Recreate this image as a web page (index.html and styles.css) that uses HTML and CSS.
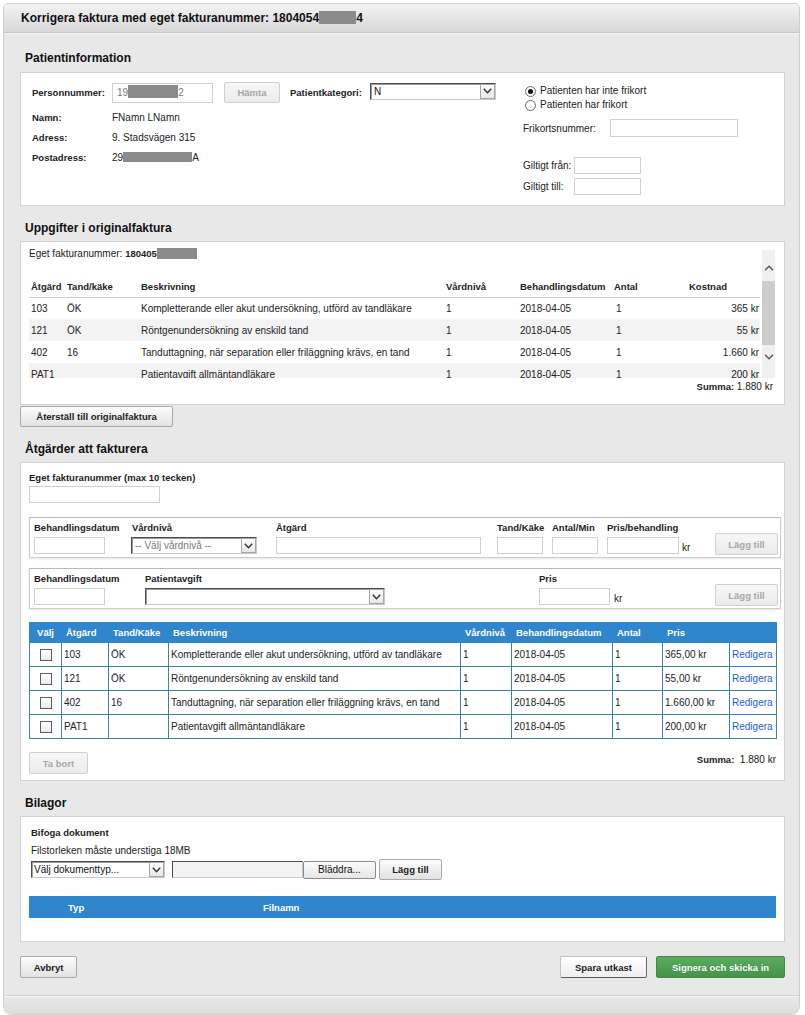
FILE: index.html
```html
<!DOCTYPE html>
<html lang="sv">
<head>
<meta charset="utf-8">
<title>Korrigera faktura</title>
<link rel="stylesheet" href="styles.css">
</head>
<body>
<div class="dialog">
  <div class="dialog-header">
    <h1 class="dialog-title">Korrigera faktura med eget fakturanummer: 1804054<span class="redact redact-title"></span>4</h1>
  </div>
  <div class="dialog-body">
    <h2 class="section-title first">Patientinformation</h2>
    <div class="box box-patient">
      <div class="patient-left">
        <div class="pnr-row">
          <span class="lbl lbl-w">Personnummer:</span>
          <div class="input input-pnr">19<span class="redact redact-pnr"></span>2</div>
          <button class="btn btn-disabled btn-hamta" disabled>Hämta</button>
          <span class="lbl lbl-kat">Patientkategori:</span>
          <div class="select select-kat"><span class="select-text">N</span><span class="select-arrow"><svg width="9" height="6" viewBox="0 0 9 6"><polyline points="0.8,0.8 4.5,4.8 8.2,0.8" fill="none" stroke="#333" stroke-width="1.4"/></svg></span></div>
        </div>
        <div class="info-row first-info"><span class="lbl lbl-w">Namn:</span><span>FNamn LNamn</span></div>
        <div class="info-row"><span class="lbl lbl-w">Adress:</span><span>9. Stadsvägen 315</span></div>
        <div class="info-row"><span class="lbl lbl-w">Postadress:</span><span>29<span class="redact redact-post"></span>A</span></div>
      </div>
      <div class="patient-right">
        <div class="radio-row"><span class="radio checked"></span>Patienten har inte frikort</div>
        <div class="radio-row"><span class="radio"></span>Patienten har frikort</div>
        <div class="frikort-row"><span class="lbl-frikort">Frikortsnummer:</span><input class="input input-frikort" type="text"></div>
        <div class="giltig-row giltig-first"><span class="lbl-giltig">Giltigt från:</span><input class="input input-giltig" type="text"></div>
        <div class="giltig-row"><span class="lbl-giltig">Giltigt till:</span><input class="input input-giltig" type="text"></div>
      </div>
    </div>

    <h2 class="section-title">Uppgifter i originalfaktura</h2>
    <div class="box box-orig">
      <div class="orig-wrap">
        <div class="orig-main">
          <div class="orig-nr">Eget fakturanummer: <b>180405</b><span class="redact redact-eget"></span></div>
          <table class="orig-table">
            <colgroup><col class="o-atg"><col class="o-tand"><col class="o-besk"><col class="o-vard"><col class="o-datum"><col class="o-antal"><col class="o-kost"></colgroup>
            <thead><tr><th>Åtgärd</th><th>Tand/käke</th><th>Beskrivning</th><th>Vårdnivå</th><th>Behandlingsdatum</th><th>Antal</th><th>Kostnad</th></tr></thead>
            <tbody>
              <tr><td>103</td><td>ÖK</td><td>Kompletterande eller akut undersökning, utförd av tandläkare</td><td>1</td><td>2018-04-05</td><td class="antal">1</td><td class="num">365 kr</td></tr>
              <tr class="alt"><td>121</td><td>ÖK</td><td>Röntgenundersökning av enskild tand</td><td>1</td><td>2018-04-05</td><td class="antal">1</td><td class="num">55 kr</td></tr>
              <tr><td>402</td><td>16</td><td>Tanduttagning, när separation eller friläggning krävs, en tand</td><td>1</td><td>2018-04-05</td><td class="antal">1</td><td class="num">1.660 kr</td></tr>
              <tr class="alt"><td>PAT1</td><td></td><td>Patientavgift allmäntandläkare</td><td>1</td><td>2018-04-05</td><td class="antal">1</td><td class="num">200 kr</td></tr>
            </tbody>
          </table>
        </div>
        <div class="scrollbar">
          <div class="sb-up"><svg width="10" height="6" viewBox="0 0 10 6"><polyline points="1,5.2 5,1.2 9,5.2" fill="none" stroke="#555" stroke-width="1.4"/></svg></div>
          <div class="sb-thumb"></div>
          <div class="sb-down"><svg width="10" height="6" viewBox="0 0 10 6"><polyline points="1,0.8 5,4.8 9,0.8" fill="none" stroke="#555" stroke-width="1.4"/></svg></div>
        </div>
      </div>
      <div class="orig-sum"><b>Summa:</b> 1.880 kr</div>
    </div>
    <button class="btn btn-reset">Återställ till originalfaktura</button>

    <h2 class="section-title">Åtgärder att fakturera</h2>
    <div class="box box-fak">
      <div class="fak-lbl">Eget fakturanummer (max 10 tecken)</div>
      <input class="input input-eget" type="text">

      <div class="fieldset">
        <div class="col c-datum"><span class="col-lbl">Behandlingsdatum</span><input class="input input-datum" type="text"></div>
        <div class="col c-vard"><span class="col-lbl">Vårdnivå</span><div class="select select-vard"><span class="select-text placeholder">-- Välj vårdnivå --</span><span class="select-arrow"><svg width="9" height="6" viewBox="0 0 9 6"><polyline points="0.8,0.8 4.5,4.8 8.2,0.8" fill="none" stroke="#333" stroke-width="1.4"/></svg></span></div></div>
        <div class="col c-atg"><span class="col-lbl">Åtgärd</span><input class="input input-atg" type="text"></div>
        <div class="col c-tand"><span class="col-lbl">Tand/Käke</span><input class="input input-small" type="text"></div>
        <div class="col c-antal"><span class="col-lbl">Antal/Min</span><input class="input input-small" type="text"></div>
        <div class="col c-pris"><span class="col-lbl">Pris/behandling</span><div class="with-kr"><input class="input input-pris" type="text"><span class="kr">kr</span></div></div>
        <button class="btn btn-disabled btn-lagg" disabled>Lägg till</button>
      </div>

      <div class="fieldset fieldset-2">
        <div class="col c-datum"><span class="col-lbl">Behandlingsdatum</span><input class="input input-datum" type="text"></div>
        <div class="col c-avg"><span class="col-lbl">Patientavgift</span><div class="select select-avg"><span class="select-text"></span><span class="select-arrow"><svg width="9" height="6" viewBox="0 0 9 6"><polyline points="0.8,0.8 4.5,4.8 8.2,0.8" fill="none" stroke="#333" stroke-width="1.4"/></svg></span></div></div>
        <div class="col c-pris2"><span class="col-lbl">Pris</span><div class="with-kr"><input class="input input-datum" type="text"><span class="kr kr2">kr</span></div></div>
        <button class="btn btn-disabled btn-lagg" disabled>Lägg till</button>
      </div>

      <table class="items">
        <colgroup><col class="i-valj"><col class="i-atg"><col class="i-tand"><col class="i-besk"><col class="i-vard"><col class="i-datum"><col class="i-antal"><col class="i-pris"><col class="i-red"></colgroup>
        <thead><tr><th class="center">Välj</th><th>Åtgärd</th><th>Tand/Käke</th><th>Beskrivning</th><th>Vårdnivå</th><th>Behandlingsdatum</th><th>Antal</th><th>Pris</th><th></th></tr></thead>
        <tbody>
          <tr><td class="center"><span class="checkbox"></span></td><td>103</td><td>ÖK</td><td>Kompletterande eller akut undersökning, utförd av tandläkare</td><td>1</td><td>2018-04-05</td><td>1</td><td>365,00 kr</td><td><a class="link" href="#">Redigera</a></td></tr>
          <tr><td class="center"><span class="checkbox"></span></td><td>121</td><td>ÖK</td><td>Röntgenundersökning av enskild tand</td><td>1</td><td>2018-04-05</td><td>1</td><td>55,00 kr</td><td><a class="link" href="#">Redigera</a></td></tr>
          <tr><td class="center"><span class="checkbox"></span></td><td>402</td><td>16</td><td>Tanduttagning, när separation eller friläggning krävs, en tand</td><td>1</td><td>2018-04-05</td><td>1</td><td>1.660,00 kr</td><td><a class="link" href="#">Redigera</a></td></tr>
          <tr><td class="center"><span class="checkbox"></span></td><td>PAT1</td><td></td><td>Patientavgift allmäntandläkare</td><td>1</td><td>2018-04-05</td><td>1</td><td>200,00 kr</td><td><a class="link" href="#">Redigera</a></td></tr>
        </tbody>
      </table>
      <div class="items-foot">
        <button class="btn btn-disabled btn-tabort" disabled>Ta bort</button>
        <div class="items-sum"><b>Summa:</b>&nbsp;&nbsp;1.880 kr</div>
      </div>
    </div>

    <h2 class="section-title">Bilagor</h2>
    <div class="box box-bil">
      <div class="bil-title">Bifoga dokument</div>
      <div class="bil-note">Filstorleken måste understiga 18MB</div>
      <div class="bil-controls">
        <div class="select select-dok"><span class="select-text dark">Välj dokumenttyp...</span><span class="select-arrow"><svg width="9" height="6" viewBox="0 0 9 6"><polyline points="0.8,0.8 4.5,4.8 8.2,0.8" fill="none" stroke="#333" stroke-width="1.4"/></svg></span></div>
        <div class="file-box"></div>
        <button class="btn-browse">Bläddra...</button>
        <button class="btn btn-lagg2">Lägg till</button>
      </div>
      <div class="bil-bar"><span class="bar-typ">Typ</span><span>Filnamn</span></div>
    </div>

    <div class="dialog-actions">
      <button class="btn btn-avbryt">Avbryt</button>
      <button class="btn btn-spara">Spara utkast</button>
      <button class="btn btn-signera">Signera och skicka in</button>
    </div>
  </div>
  <div class="dialog-bottom"></div>
</div>
</body>
</html>
```
FILE: styles.css
```css
* { box-sizing: border-box; }
html, body { margin: 0; padding: 0; background: #fff; }
body {
  font-family: "Liberation Sans", Arial, Helvetica, sans-serif;
  font-size: 10px;
  color: #222;
}
b { font-weight: bold; font-size: 9.5px; }

.dialog {
  margin: 3px 0 0 3px;
  width: 797px;
  border: 1px solid #cfcfcf;
  border-radius: 5px 5px 9px 9px;
  background: #e8e8e8;
  overflow: hidden;
}
.dialog-header {
  height: 29px;
  padding-left: 17px;
  background: linear-gradient(#f3f3f3, #d7d7d7);
  border-bottom: 1px solid #c6c6c6;
  box-shadow: 0 1px 0 #f6f6f6;
}
.dialog-title {
  margin: 0;
  font-size: 12px;
  line-height: 28px;
  font-weight: bold;
  color: #111;
}
.redact { display: inline-block; background: #8b8b8b; vertical-align: middle; }
.redact-title { width: 37px; height: 13px; margin-top: -2px; }
.redact-pnr { width: 50px; height: 13px; margin-top: -2px; }
.redact-post { width: 69px; height: 10px; margin-top: -2px; }
.redact-eget { width: 40px; height: 11px; margin-top: -2px; }

.dialog-body { padding: 0 14px 0 16px; }
.section-title {
  margin: 0;
  padding: 15px 0 5px 5px;
  font-size: 12px;
  line-height: 15px;
  font-weight: bold;
  color: #111;
}
.section-title.first { padding-top: 18px; padding-bottom: 6px; }
.box { background: #fff; border: 1px solid #d2d2d2; }

/* inputs, selects, buttons */
.input {
  display: block;
  height: 17px;
  border: 1px solid #d0d0d0;
  background: #fff;
  margin: 0;
  padding: 0 3px;
  font-family: inherit;
  font-size: 10px;
}
.select {
  display: flex;
  align-items: center;
  height: 17px;
  border: 1px solid;
  border-color: #4d4d4d #c9c9c9 #c9c9c9 #4d4d4d;
  box-shadow: inset 1px 1px 0 #9a9a9a;
  background: #fff;
}
.select-text {
  flex: 1;
  padding-left: 3px;
  line-height: 15px;
  white-space: nowrap;
  overflow: hidden;
  color: #111;
}
.select-text.placeholder { color: #7a7a7a; }
.select-arrow {
  width: 15px;
  height: 15px;
  border: 1px solid #a6a6a6;
  background: linear-gradient(#fdfdfd, #e7e7e7);
  display: flex;
  align-items: center;
  justify-content: center;
}
.btn {
  display: block;
  height: 22px;
  margin: 0;
  padding: 0;
  font-family: inherit;
  font-size: 9.5px;
  font-weight: bold;
  color: #222;
  text-align: center;
  border: 1px solid #a9a9a9;
  border-radius: 2px;
  background: linear-gradient(#fcfcfc, #e2e2e2);
}
.btn-disabled {
  color: #a8a8a8;
  border-color: #d0d0d0;
  background: linear-gradient(#f7f7f7, #ebebeb);
}

/* patient box */
.box-patient { display: flex; }
.patient-left { width: 502px; padding: 9px 0 0 11px; }
.pnr-row { display: flex; align-items: center; }
.lbl { font-weight: bold; font-size: 9.5px; white-space: nowrap; }
.lbl-w { width: 80px; flex: none; }
.input-pnr {
  width: 101px;
  height: 20px;
  line-height: 18px;
  color: #7d7d7d;
  padding: 0 4px;
  white-space: nowrap;
}
.btn-hamta { width: 56px; height: 21px; margin-left: 11px; }
.lbl-kat { margin-left: 10px; width: 80px; }
.select-kat { width: 126px; margin-top: -3px; }
.info-row { display: flex; line-height: 20px; }
.info-row.first-info { margin-top: 5px; }

.patient-right { flex: 1; padding: 11px 0 10px 0; }
.radio-row { display: flex; align-items: center; height: 14px; line-height: 14px; white-space: nowrap; }
.radio {
  width: 11px;
  height: 11px;
  margin: 0 4px 0 2px;
  border-radius: 50%;
  border: 1px solid #6d6d6d;
  background: radial-gradient(circle, #fff 55%, #e2e2e2);
  display: flex;
  align-items: center;
  justify-content: center;
}
.radio.checked::after {
  content: "";
  width: 5px;
  height: 5px;
  border-radius: 50%;
  background: #111;
}
.frikort-row { display: flex; align-items: center; margin-top: 7px; }
.lbl-frikort { width: 87px; }
.input-frikort { width: 128px; height: 18px; }
.giltig-row { display: flex; align-items: center; margin-top: 4px; }
.giltig-row.giltig-first { margin-top: 20px; }
.lbl-giltig { width: 51px; white-space: nowrap; }
.input-giltig { width: 67px; }

/* original invoice */
.box-orig { padding: 6px 9px 11px 8px; }
.orig-wrap { display: flex; align-items: flex-start; }
.orig-main { width: 731px; height: 130px; overflow: hidden; }
.orig-nr { line-height: 12px; white-space: nowrap; }
.orig-table {
  width: 731px;
  margin-top: 17px;
  border-collapse: collapse;
  table-layout: fixed;
}
.o-atg { width: 36px; }
.o-tand { width: 74px; }
.o-besk { width: 305px; }
.o-vard { width: 74px; }
.o-datum { width: 94px; }
.o-antal { width: 75px; }
.o-kost { width: 73px; }
.orig-table th {
  height: 20px;
  padding: 0 0 0 2px;
  text-align: left;
  font-size: 9.5px;
  font-weight: bold;
  border-bottom: 1px solid #cfcfcf;
  white-space: nowrap;
}
.orig-table td {
  height: 22px;
  padding: 0 0 0 2px;
  white-space: nowrap;
  overflow: hidden;
}
.orig-table td.antal { padding-left: 4px; }
.orig-table td.num { text-align: right; padding-right: 1px; }
.orig-table tr.alt td { background: #f3f3f3; }
.scrollbar {
  width: 13px;
  height: 128px;
  margin: 2px 0 0 2px;
  background: #f0f0f0;
  display: flex;
  flex-direction: column;
}
.sb-up { height: 31px; padding-top: 15px; display: flex; justify-content: center; align-items: flex-start; }
.sb-thumb { height: 64px; background: #cdcdcd; }
.sb-down { height: 33px; padding-top: 9px; display: flex; justify-content: center; align-items: flex-start; }
.orig-sum { margin-top: 3px; line-height: 12px; text-align: right; padding-right: 2px; }
.btn-reset { width: 153px; height: 21px; margin-top: 1px; }

/* åtgärder */
.box-fak { padding: 9px 8px 6px 8px; }
.fak-lbl { font-weight: bold; font-size: 9.5px; line-height: 12px; }
.input-eget { width: 131px; margin-top: 2px; }
.fieldset {
  display: flex;
  align-items: flex-end;
  margin: 14px -5px 0 0;
  padding: 4px 2px 3px 4px;
  border: 1px solid #cdcdcd;
  border-top-color: #b9b9b9;
  box-shadow: 0 1px 2px rgba(0, 0, 0, 0.10);
  background: #fff;
}
.fieldset-2 { margin-top: 10px; }
.col { display: flex; flex-direction: column; flex: none; }
.col-lbl {
  font-weight: bold;
  font-size: 9.5px;
  line-height: 12px;
  white-space: nowrap;
  margin-bottom: 3px;
}
.c-datum { width: 71px; }
.input-datum { width: 71px; }
.c-vard { width: 126px; margin-left: 26px; }
.c-vard .col-lbl { padding-left: 1px; }
.select-vard { width: 126px; }
.c-atg { width: 205px; margin-left: 19px; }
.input-atg { width: 205px; }
.c-tand { width: 46px; margin-left: 16px; }
.c-antal { width: 46px; margin-left: 9px; }
.input-small { width: 46px; }
.c-pris { margin-left: 9px; }
.with-kr { display: flex; align-items: flex-end; }
.input-pris { width: 72px; }
.kr { line-height: 12px; margin-left: 3px; }
.kr.kr2 { margin-left: 4px; }
.btn-lagg { width: 63px; margin-left: auto; margin-bottom: -1px; }
.c-avg { width: 240px; margin-left: 40px; }
.select-avg { width: 240px; }
.c-pris2 { margin-left: 154px; }

.items {
  width: 747px;
  margin-top: 13px;
  border-collapse: collapse;
  table-layout: fixed;
}
.i-valj { width: 32px; }
.i-atg { width: 47px; }
.i-tand { width: 60px; }
.i-besk { width: 292px; }
.i-vard { width: 51px; }
.i-datum { width: 101px; }
.i-antal { width: 50px; }
.i-pris { width: 67px; }
.i-red { width: 47px; }
.items th {
  height: 20px;
  padding: 0 0 0 4px;
  text-align: left;
  font-size: 9.5px;
  font-weight: bold;
  color: #fff;
  background: #2f86cc;
  border: 1px solid #2f86cc;
  white-space: nowrap;
}
.items td {
  height: 24px;
  padding: 0 0 0 2px;
  border: 1px solid #3a7fc1;
  white-space: nowrap;
  overflow: hidden;
}
.items th.center, .items td.center { text-align: center; padding: 0; }
.checkbox {
  display: inline-block;
  vertical-align: middle;
  width: 12px;
  height: 12px;
  border: 1px solid #5e5e5e;
  background: linear-gradient(#fff, #ececec);
}
.link { color: #1c5fd4; text-decoration: none; }
.items-foot { display: flex; justify-content: space-between; align-items: flex-start; margin-top: 13px; }
.btn-tabort { width: 59px; }
.items-sum { padding-top: 2px; line-height: 12px; }

/* bilagor */
.box-bil { padding: 10px 8px 23px 8px; }
.bil-title { font-weight: bold; font-size: 9.5px; line-height: 12px; margin-left: 2px; }
.bil-note { line-height: 12px; margin: 6px 0 0 2px; }
.bil-controls { display: flex; align-items: center; height: 21px; margin-top: 2px; }
.select-dok { width: 134px; margin-left: 2px; }
.select-text.dark { color: #111; padding-left: 2px; }
.file-box {
  width: 131px;
  height: 17px;
  margin-left: 7px;
  border: 1px solid;
  border-color: #4d4d4d #c9c9c9 #c9c9c9 #4d4d4d;
  background: #f3f3f3;
}
.btn-browse {
  width: 73px;
  height: 18px;
  margin: 0;
  padding: 0;
  font-family: inherit;
  font-size: 10px;
  color: #111;
  border: 1px solid #8a8a8a;
  border-radius: 2px;
  background: linear-gradient(#fbfbfb, #e6e6e6);
}
.btn-lagg2 { width: 63px; height: 21px; margin-left: 3px; }
.bil-bar {
  display: flex;
  align-items: center;
  height: 22px;
  margin-top: 16px;
  background: #2f86cc;
  color: #fff;
  font-weight: bold;
  font-size: 9.5px;
}
.bar-typ { margin-left: 39px; width: 195px; }

/* footer actions */
.dialog-actions { display: flex; margin-top: 14px; padding-bottom: 17px; }
.btn-avbryt { width: 57px; }
.btn-spara {
  width: 87px;
  margin-left: auto;
  border-color: #c2c2c2 #6a6a6a #5a5a5a #c2c2c2;
  background: linear-gradient(#ffffff, #eeeeee);
}
.btn-signera {
  width: 129px;
  margin-left: 9px;
  color: #fff;
  border-color: #3f8d45;
  background: linear-gradient(#5bab60, #43934a);
  text-shadow: 0 0 1px rgba(0, 0, 0, 0.25);
}
.dialog-bottom {
  height: 19px;
  border-top: 1px solid #d3d3d3;
  box-shadow: inset 0 1px 0 #f4f4f4;
  background: linear-gradient(#e9e9e9, #dcdcdc);
}
```
